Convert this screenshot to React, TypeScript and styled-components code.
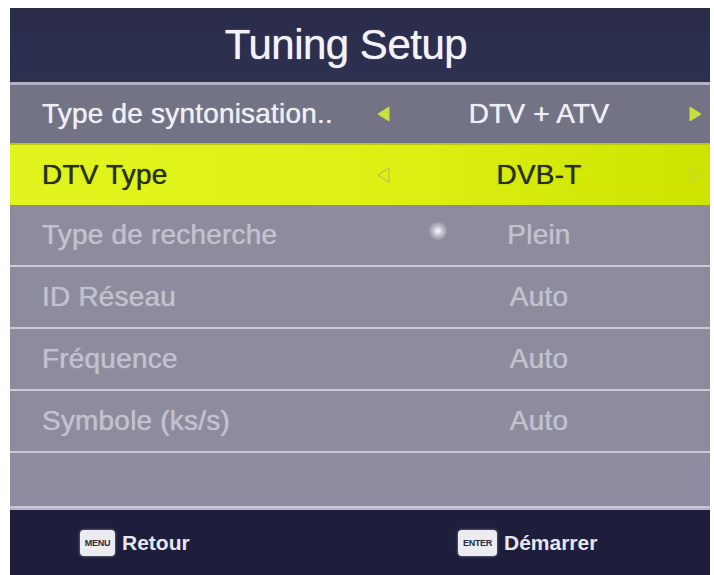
import React from "react"
import styled, { createGlobalStyle } from "styled-components"

const GlobalStyle = createGlobalStyle`
  html, body {
    margin: 0;
    padding: 0;
    background: #ffffff;
  }
  body {
    font-family: "Liberation Sans", Arial, sans-serif;
  }
`

const Screen = styled.div`
  position: relative;
  width: 700px;
  height: 567px;
  margin: 8px 4px 0 10px;
  display: flex;
  flex-direction: column;
  overflow: hidden;
  background: #8d8c9e;
`

const Header = styled.div`
  height: 74px;
  flex-shrink: 0;
  display: flex;
  align-items: center;
  justify-content: center;
  padding-right: 28px;
  background: linear-gradient(180deg, #2a2c4a 0%, #2e3050 100%);
  border-bottom: 3px solid #b2b2c4;
`

const Title = styled.h1`
  margin: 0;
  font-family: "Liberation Sans", Arial, sans-serif;
  font-weight: normal;
  font-size: 42px;
  letter-spacing: -0.5px;
  color: #f2f2f8;
  text-shadow: 0 0 1px rgba(255, 255, 255, 0.8);
`

type Tone = "active" | "selected" | "disabled" | "blank"

const rowBackground: Record<Tone, string> = {
  active: "#727485",
  selected: "linear-gradient(90deg, #e2f41e 0%, #dcf014 55%, #cde400 100%)",
  disabled: "#8d8c9e",
  blank: "#8e8ca0",
}

const rowColor: Record<Tone, string> = {
  active: "#eeeef4",
  selected: "#2a300c",
  disabled: "#c2c2ce",
  blank: "#c2c2ce",
}

const Row = styled.div<{ $tone: Tone; $height: number }>`
  height: ${(p) => p.$height}px;
  flex-shrink: 0;
  box-sizing: border-box;
  display: grid;
  grid-template-columns: 363px 20px 1fr 20px;
  align-items: center;
  padding-right: 5px;
  background: ${(p) => rowBackground[p.$tone]};
  color: ${(p) => rowColor[p.$tone]};
  border-bottom: ${(p) =>
    p.$tone === "disabled" || p.$tone === "blank" ? "2px solid #c9c9d6" : "none"};
  border-top: ${(p) => (p.$tone === "selected" ? "2px solid #b8c814" : "none")};
`

const Label = styled.span`
  padding-left: 32px;
  font-size: 28px;
  letter-spacing: 0.2px;
  white-space: nowrap;
  text-shadow: 0 0 0.8px currentColor;
`

const Value = styled.span`
  text-align: center;
  font-size: 28px;
  letter-spacing: 0.2px;
  white-space: nowrap;
  text-shadow: 0 0 0.8px currentColor;
`

const ArrowBox = styled.span`
  display: flex;
  align-items: center;
  justify-content: center;
`

const Footer = styled.div`
  flex: 1;
  display: grid;
  grid-template-columns: 378px 1fr;
  align-items: center;
  padding-left: 70px;
  background: #1e1d3b;
  border-top: 2px solid #b4b4c8;
`

const Hint = styled.div`
  display: flex;
  align-items: center;
  gap: 7px;
`

const KeyCap = styled.span<{ $width: number }>`
  width: ${(p) => p.$width}px;
  height: 26px;
  border-radius: 4px;
  background: #ececf0;
  color: #2a2a3a;
  display: flex;
  align-items: center;
  justify-content: center;
  font-family: "Liberation Sans", Arial, sans-serif;
  font-size: 9px;
  font-weight: bold;
  letter-spacing: -0.3px;
  box-shadow: 0 0 3px rgba(255, 255, 255, 0.5);
`

const HintText = styled.span`
  font-size: 21px;
  font-weight: bold;
  color: #e6e6ee;
`

const Glare = styled.span`
  position: absolute;
  left: 418px;
  top: 214px;
  width: 20px;
  height: 18px;
  border-radius: 50%;
  background: radial-gradient(circle, rgba(255, 255, 255, 0.95) 0%, rgba(255, 255, 255, 0.4) 40%, rgba(255, 255, 255, 0) 75%);
  pointer-events: none;
`

type ArrowProps = { dir: "left" | "right"; filled: boolean; color: string }

const Arrow: React.FC<ArrowProps> = ({ dir, filled, color }) => {
  const points = dir === "left" ? "13,1 13,15 2,8" : "2,1 2,15 13,8"
  return (
    <svg width="15" height="16" viewBox="0 0 15 16">
      <polygon
        points={points}
        fill={filled ? color : "none"}
        stroke={color}
        strokeWidth={filled ? 1 : 1.4}
        strokeLinejoin="round"
      />
    </svg>
  )
}

type Item = { label: string; value: string; tone: Tone; height: number }

const items: Item[] = [
  { label: "Type de syntonisation..", value: "DTV + ATV", tone: "active", height: 58 },
  { label: "DTV Type", value: "DVB-T", tone: "selected", height: 62 },
  { label: "Type de recherche", value: "Plein", tone: "disabled", height: 62 },
  { label: "ID Réseau", value: "Auto", tone: "disabled", height: 62 },
  { label: "Fréquence", value: "Auto", tone: "disabled", height: 62 },
  { label: "Symbole (ks/s)", value: "Auto", tone: "disabled", height: 62 },
]

export default function App() {
  return (
    <>
      <GlobalStyle />
      <Screen>
        <Header>
          <Title>Tuning Setup</Title>
        </Header>
        {items.map((item) => (
          <Row key={item.label} $tone={item.tone} $height={item.height}>
            <Label>{item.label}</Label>
            <ArrowBox>
              {item.tone === "active" && <Arrow dir="left" filled color="#c6e040" />}
              {item.tone === "selected" && <Arrow dir="left" filled={false} color="#b9c94a" />}
            </ArrowBox>
            <Value>{item.value}</Value>
            <ArrowBox>
              {item.tone === "active" && <Arrow dir="right" filled color="#c6e040" />}
              {item.tone === "selected" && <Arrow dir="right" filled={false} color="#c4d83a" />}
            </ArrowBox>
          </Row>
        ))}
        <Row $tone="blank" $height={55} />
        <Footer>
          <Hint>
            <KeyCap $width={35}>MENU</KeyCap>
            <HintText>Retour</HintText>
          </Hint>
          <Hint>
            <KeyCap $width={39}>ENTER</KeyCap>
            <HintText>Démarrer</HintText>
          </Hint>
        </Footer>
        <Glare />
      </Screen>
    </>
  )
}
